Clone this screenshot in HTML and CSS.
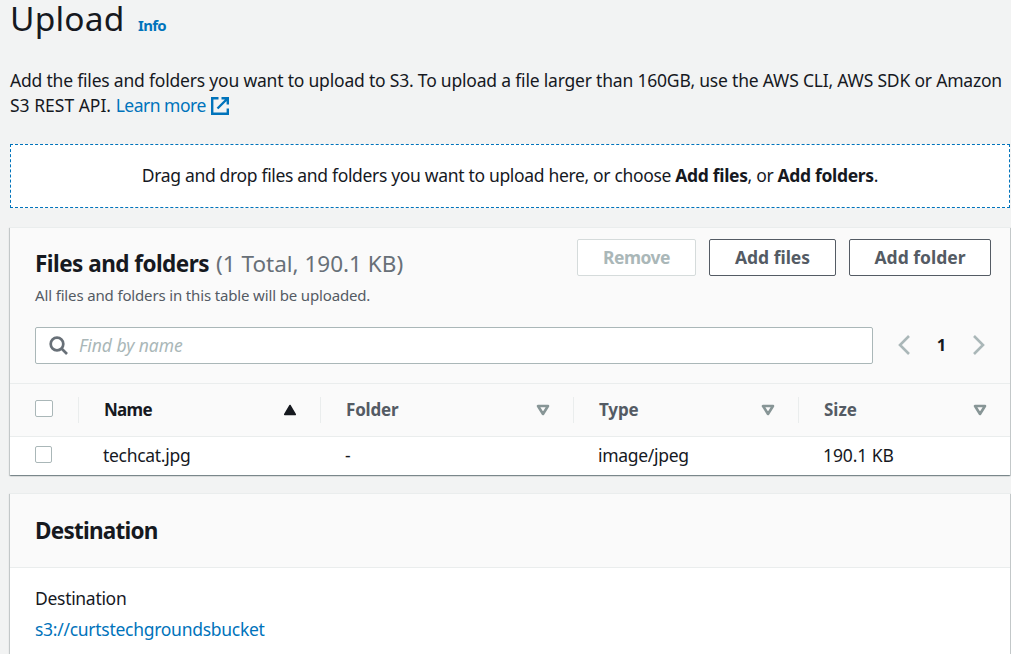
FILE: index.html
```
<!DOCTYPE html>
<html lang="en">
<head>
<meta charset="utf-8">
<title>Upload</title>
<link rel="stylesheet" href="styles.css">
</head>
<body>
<main class="page">
  <header class="page-header">
    <h1 class="page-title">Upload</h1>
    <a class="info-link">Info</a>
  </header>
  <p class="intro"><span class="intro-first">Add the files and folders you want to upload to S3. To upload a file larger than 160GB, use the AWS CLI, AWS SDK or Amazon</span><br><span class="intro-second">S3 REST API.</span> <a class="link learn-more">Learn more</a><svg class="external-icon" viewBox="0 0 18 18"><path d="M7.500 1.200H1.200v15.600h15.600v-5.300M10.500 1.200h6.300v6.300M16.500 1.500L6.500 11.500"/></svg></p>
  <div class="dropzone"><span class="drop-text">Drag and drop files and folders you want to upload here, or choose <b>Add files</b>, or <b>Add folders</b>.</span></div>

  <section class="panel files-panel">
    <div class="panel-top">
      <div class="heading">
        <h2 class="panel-title"><span class="files-title">Files and folders</span><span class="counter">(1 Total, 190.1 KB)</span></h2>
        <p class="description">All files and folders in this table will be uploaded.</p>
      </div>
      <div class="actions">
        <button class="button remove" disabled>Remove</button>
        <button class="button add-files">Add files</button>
        <button class="button add-folder">Add folder</button>
      </div>
    </div>
    <div class="tools">
      <div class="search">
        <svg class="search-icon" viewBox="0 0 20 20"><circle cx="8" cy="8" r="6.300"/><path d="M12.500 12.500L18 18"/></svg>
        <span class="placeholder">Find by name</span>
      </div>
      <div class="pagination">
        <svg class="chevron" viewBox="0 0 12 20"><path d="M11 1L2 10l9 9"/></svg>
        <span class="page-number">1</span>
        <svg class="chevron" viewBox="0 0 12 20"><path d="M1 1l9 9-9 9"/></svg>
      </div>
    </div>
    <div class="row head-row">
      <div class="cell check-cell"><span class="checkbox"></span></div>
      <div class="cell sorted"><span class="name-label">Name</span><svg class="sort" viewBox="0 0 14 12"><path class="sort-solid" d="M7 1.500L12.300 10.500H1.700z"/></svg></div>
      <div class="cell"><span class="folder-label">Folder</span><svg class="sort" viewBox="0 0 14 12"><path d="M2 2h10L7 10z"/></svg></div>
      <div class="cell"><span class="type-label">Type</span><svg class="sort" viewBox="0 0 14 12"><path d="M2 2h10L7 10z"/></svg></div>
      <div class="cell"><span class="size-label">Size</span><svg class="sort" viewBox="0 0 14 12"><path d="M2 2h10L7 10z"/></svg></div>
    </div>
    <div class="row body-row">
      <div class="cell check-cell"><span class="checkbox"></span></div>
      <div class="cell"><span class="file-name">techcat.jpg</span></div>
      <div class="cell">-</div>
      <div class="cell"><span class="file-type">image/jpeg</span></div>
      <div class="cell"><span class="file-size">190.1 KB</span></div>
    </div>
  </section>

  <section class="panel destination-panel">
    <div class="destination-header"><h2 class="panel-title destination-title">Destination</h2></div>
    <div class="destination-body">
      <div class="destination-label">Destination</div>
      <a class="link bucket">s3://curtstechgroundsbucket</a>
    </div>
  </section>
</main>
</body>
</html>
```
FILE: styles.css
```
* { box-sizing: border-box; }
body {
  margin: 0;
  height: 654px;
  overflow: hidden;
  background: #f2f3f3;
  color: #16191f;
  font: 17.5px/25px "Noto Sans", "Open Sans", sans-serif;
  white-space: nowrap;
}
h1, h2, p { margin: 0; }
.page { display: flex; flex-direction: column; height: 654px; padding: 0 1px 0 10px; }
.page-header { display: flex; align-items: baseline; height: 68px; }
.page-title { width: 128px; font-size: 33.5px; line-height: 36px; font-weight: 400; letter-spacing: .2px; }
.info-link { color: #0073bb; font-size: 15px; font-weight: 700; letter-spacing: -.7px; }
.intro { height: 76px; }
.intro-first { letter-spacing: -.2px; }
.intro-second { letter-spacing: 0; }
.learn-more { letter-spacing: -.5px; }
.link { color: #0073bb; }
.external-icon { width: 18px; height: 18px; margin-left: 5px; vertical-align: -3px; fill: none; stroke: #0073bb; stroke-width: 2.4; }
.dropzone { display: flex; align-items: center; justify-content: center; height: 64px; padding-bottom: 2px; border: 1px dashed #0073bb; background: #fff; letter-spacing: -.33px; }
.panel { background: #fff; box-shadow: 0 1px 1px rgba(0,28,36,.3), 1px 1px 1px rgba(0,28,36,.15), -1px 1px 1px rgba(0,28,36,.15); border-top: 1px solid #eaeded; }
.files-panel { margin-top: 19px; height: 248px; }
.panel-top { display: flex; justify-content: space-between; height: 99px; padding: 11px 19px 0 25px; background: #fafafa; }
.heading { padding-top: 9px; }
.panel-title { font-size: 22.5px; line-height: 32px; font-weight: 700; letter-spacing: -.53px; }
.counter { margin-left: 7px; color: #687078; font-weight: 400; letter-spacing: 0; }
.description { margin-top: 5px; color: #545b64; font-size: 15px; line-height: 20px; letter-spacing: -.15px; }
.actions { display: flex; gap: 13px; }
.button { height: 37px; padding: 0; border: 1px solid #545b64; border-radius: 2px; background: #fff; color: #545b64; font: 700 17.5px/25px "Noto Sans", sans-serif; }
.remove { width: 119px; border-color: #d5dbdb; color: #aab7b8; letter-spacing: -.5px; }
.add-files { width: 127px; }
.add-folder { width: 142px; }
.tools { display: flex; height: 57px; padding-left: 25px; background: #fafafa; border-bottom: 1px solid #eaeded; }
.search { display: flex; align-items: center; width: 838px; height: 37px; padding-left: 13px; border: 1px solid #aab7b8; border-radius: 2px; background: #fff; }
.search-icon { width: 20px; height: 20px; margin-right: 10px; fill: none; stroke: #687078; stroke-width: 2.7; }
.placeholder { color: #aab7b8; font-style: italic; letter-spacing: -.05px; }
.pagination { display: flex; align-items: center; justify-content: space-between; width: 87px; height: 36px; margin-left: 25px; }
.chevron { width: 12px; height: 20px; fill: none; stroke: #aab7b8; stroke-width: 2.6; }
.page-number { padding-bottom: 2px; font-size: 16.5px; font-weight: 700; }
.row { display: grid; grid-template-columns: 68px 242px 253px 225px 212px; align-items: center; }
.head-row { height: 53px; padding-bottom: 1px; background: #fafafa; border-bottom: 1px solid #eaeded; color: #545b64; font-size: 17px; font-weight: 700; }
.body-row { height: 38px; padding-bottom: 2px; }
.cell { display: flex; align-items: center; justify-content: space-between; height: 26px; padding: 0 23px 0 25px; }
.head-row .cell + .cell { border-left: 1px solid #eaeded; }
.sorted { color: #16191f; }
.name-label { letter-spacing: -.7px; }
.folder-label { letter-spacing: -.2px; }
.type-label { letter-spacing: -.1px; }
.size-label { letter-spacing: 0; }
.file-name, .file-type { letter-spacing: -.3px; }
.file-size { letter-spacing: -.1px; }
.check-cell { padding: 0 0 2px 25px; }
.checkbox { width: 18px; height: 17px; border: 1px solid #aab7b8; border-radius: 2px; background: #fff; }
.body-row .checkbox { width: 17px; }
.sort { width: 14px; height: 12px; fill: none; stroke: #879596; stroke-width: 2.6; stroke-linejoin: round; }
.sort-solid { fill: #16191f; stroke: #16191f; stroke-width: 1.5; }
.destination-panel { flex: 1; min-height: 0; margin-top: 18px; }
.destination-header { height: 74px; padding: 21px 25px 0; background: #fafafa; border-bottom: 1px solid #eaeded; }
.destination-title { letter-spacing: -.75px; }
.destination-body { padding: 18px 25px 0; }
.destination-label { height: 31px; letter-spacing: -.3px; }
.bucket { letter-spacing: -.28px; }
```
